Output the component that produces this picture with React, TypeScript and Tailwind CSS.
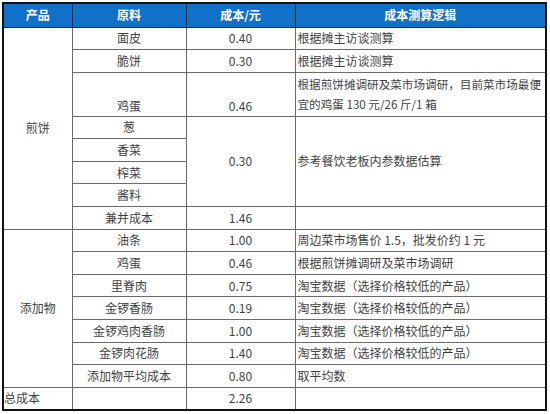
const font = { fontFamily: '"Noto Sans CJK SC", "Noto Sans", sans-serif' };

type Row = {
  product?: { label: string; span: number; left?: boolean };
  item: string;
  cost?: { value: string; span: number };
  note?: { text: React.ReactNode; span: number };
  tall?: boolean;
};

const rows: Row[] = [
  { product: { label: '煎饼', span: 8 }, item: '面皮', cost: { value: '0.40', span: 1 }, note: { text: '根据摊主访谈测算', span: 1 } },
  { item: '脆饼', cost: { value: '0.30', span: 1 }, note: { text: '根据摊主访谈测算', span: 1 } },
  {
    item: '鸡蛋',
    tall: true,
    cost: { value: '0.46', span: 1 },
    note: {
      text: (
        <>
          根据煎饼摊调研及菜市场调研，目前菜市场最便
          <br />
          宜的鸡蛋 130 元/26 斤/1 箱
        </>
      ),
      span: 1,
    },
  },
  { item: '葱', cost: { value: '0.30', span: 4 }, note: { text: '参考餐饮老板内参数据估算', span: 4 } },
  { item: '香菜' },
  { item: '榨菜' },
  { item: '酱料' },
  { item: '兼并成本', cost: { value: '1.46', span: 1 }, note: { text: '', span: 1 } },
  { product: { label: '添加物', span: 7 }, item: '油条', cost: { value: '1.00', span: 1 }, note: { text: '周边菜市场售价 1.5，批发价约 1 元', span: 1 } },
  { item: '鸡蛋', cost: { value: '0.46', span: 1 }, note: { text: '根据煎饼摊调研及菜市场调研', span: 1 } },
  { item: '里脊肉', cost: { value: '0.75', span: 1 }, note: { text: '淘宝数据（选择价格较低的产品）', span: 1 } },
  { item: '金锣香肠', cost: { value: '0.19', span: 1 }, note: { text: '淘宝数据（选择价格较低的产品）', span: 1 } },
  { item: '金锣鸡肉香肠', cost: { value: '1.00', span: 1 }, note: { text: '淘宝数据（选择价格较低的产品）', span: 1 } },
  { item: '金锣肉花肠', cost: { value: '1.40', span: 1 }, note: { text: '淘宝数据（选择价格较低的产品）', span: 1 } },
  { item: '添加物平均成本', cost: { value: '0.80', span: 1 }, note: { text: '取平均数', span: 1 } },
  { product: { label: '总成本', span: 1, left: true }, item: '', cost: { value: '2.26', span: 1 }, note: { text: '', span: 1 } },
];

const cell = 'border border-[#6b6b6b] p-0 whitespace-nowrap';

export default function App() {
  return (
    <div className="w-[550px] h-[414px] bg-white pl-[2px] pt-[2px] overflow-hidden" style={font}>
      <table className="table-fixed border-collapse border-2 border-[#111] w-[545px] text-[12px] text-[#3f3f3f]">
        <colgroup>
          <col className="w-[69px]" />
          <col className="w-[114px]" />
          <col className="w-[109px]" />
          <col className="w-[251px]" />
        </colgroup>
        <thead>
          <tr className="h-[24px] bg-[#1170c8] text-white">
            <th className="border border-[#222] font-bold">产品</th>
            <th className="border border-[#222] font-bold">原料</th>
            <th className="border border-[#222] font-bold">成本/元</th>
            <th className="border border-[#222] font-bold">成本测算逻辑</th>
          </tr>
        </thead>
        <tbody>
          {rows.map((r, i) => (
            <tr key={i} className={r.tall ? 'h-[44px]' : 'h-[22.6px]'}>
              {r.product && (
                <td
                  rowSpan={r.product.span}
                  className={`${cell} ${r.product.left ? 'text-left' : 'text-center'} align-middle`}
                >
                  {r.product.label}
                </td>
              )}
              <td className={`${cell} text-center ${r.tall ? 'align-bottom pb-[1px]' : 'align-middle'}`}>{r.item}</td>
              {r.cost && (
                <td rowSpan={r.cost.span} className={`${cell} text-center ${r.tall ? 'align-bottom pb-[1px]' : 'align-middle'}`}>
                  {r.cost.value}
                </td>
              )}
              {r.note && (
                <td
                  rowSpan={r.note.span}
                  className={`${cell} pl-[2px] text-left align-middle ${r.tall ? 'leading-[20px] text-[11.6px]' : ''}`}
                >
                  {r.note.text}
                </td>
              )}
            </tr>
          ))}
        </tbody>
      </table>
    </div>
  );
}
